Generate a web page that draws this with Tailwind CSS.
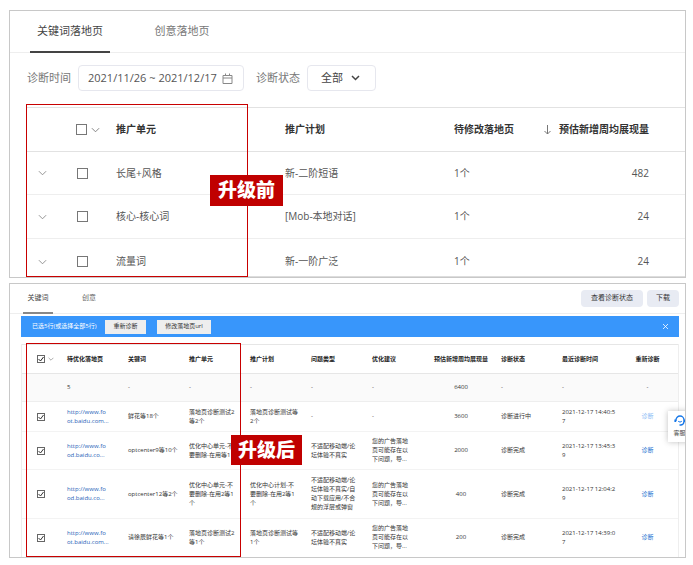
<!DOCTYPE html>
<html lang="zh-CN">
<head>
    <meta charset="UTF-8">
    <meta name="viewport" content="width=device-width, initial-scale=1.0">
    <title>落地页诊断</title>
    <script src="https://cdn.jsdelivr.net/npm/@tailwindcss/browser@4"></script>
</head>
<body class="bg-white pt-[10px] pr-[7px] pb-[7px] pl-[9px] font-['Open_Sans','Noto_Sans_CJK_SC',sans-serif] text-[#444]">
    <svg class="hidden" xmlns="http://www.w3.org/2000/svg">
        <symbol id="chevron" viewBox="0 0 10 6"><path d="M1 1l4 4 4-4" fill="none" stroke="currentColor"/></symbol>
        <symbol id="check" viewBox="0 0 8 8"><path d="M1.5 4l2 2 3-4" fill="none" stroke="currentColor"/></symbol>
    </svg>

    <!-- Before -->
    <section class="relative border border-[#c8c8c8]">
        <nav class="flex h-[42px] gap-[31px] border-b border-[#eee] pl-5 text-[11px]">
            <a href="#" class="-mb-px flex w-20 items-center justify-center border-b-2 border-[#444] text-[#444]">关键词落地页</a>
            <a href="#" class="flex w-[82px] items-center justify-center text-[#777]">创意落地页</a>
        </nav>
        <form class="flex items-center pt-3 pb-4 pl-[17px] text-[11px] text-[#777]">
            <label for="range">诊断时间</label>
            <div class="ml-[7px] flex h-[26px] w-[166px] items-center rounded-sm border border-[#e6e7ee] pr-2.5 pl-[9px]">
                <input id="range" type="text" value="2021/11/26 ~ 2021/12/17" class="min-w-0 flex-1 text-[#555] outline-none">
                <svg class="h-[11px] w-[11px] shrink-0 text-[#888]" viewBox="0 0 11 11" fill="none" stroke="currentColor"><path d="M1 2.5h9v8H1zM1 5h9M3.5 .5v2M7.500 .5v2"/></svg>
            </div>
            <label for="status" class="ml-3">诊断状态</label>
            <div class="ml-[7px] grid h-[26px] w-[69px] items-center rounded-sm border border-[#e6e7ee] text-[#444]">
                <select id="status" class="col-start-1 row-start-1 h-full w-full appearance-none pl-[13px] outline-none">
                    <option>全部</option>
                </select>
                <svg class="pointer-events-none col-start-1 row-start-1 mr-[15px] h-[6px] w-[9px] justify-self-end" viewBox="0 0 9 6" fill="none" stroke="currentColor" stroke-width="1.5"><path d="M1 1l3.500 3.500L8 1"/></svg>
            </div>
        </form>
        <div class="pl-4">
            <table class="w-full table-fixed text-left text-[10px] text-[#555]">
                <colgroup>
                    <col class="w-[45px]">
                    <col class="w-[45px]">
                    <col class="w-[169px]">
                    <col class="w-[169px]">
                    <col class="w-[68px]">
                    <col>
                </colgroup>
                <thead class="text-[#333]">
                    <tr class="h-11 border-y border-[#e2e2e2]">
                        <th></th>
                        <th class="pl-[5px]">
                            <div class="flex items-center gap-1">
                                <input type="checkbox" aria-label="全选" class="h-[11px] w-[11px] appearance-none border border-[#777]">
                                <svg class="h-[6px] w-[9px] text-[#777]"><use href="#chevron"/></svg>
                            </div>
                        </th>
                        <th>推广单元</th>
                        <th>推广计划</th>
                        <th class="whitespace-nowrap">待修改落地页</th>
                        <th class="pr-9">
                            <div class="flex items-center justify-end gap-2">
                                <svg class="h-[10px] w-[7px] text-[#777]" viewBox="0 0 7 10" fill="none" stroke="currentColor"><path d="M3.500 0v9M.5 6l3 3 3-3"/></svg>
                                <span class="whitespace-nowrap">预估新增周均展现量</span>
                            </div>
                        </th>
                    </tr>
                </thead>
                <tbody>
                    <tr class="h-[43px] border-b border-[#eee]">
                        <td class="pl-3"><button type="button" aria-label="展开" class="block text-[#888]"><svg class="h-[6px] w-[9px]"><use href="#chevron"/></svg></button></td>
                        <td class="pl-1.5"><input type="checkbox" aria-label="长尾+风格" class="block h-[11px] w-[11px] appearance-none border border-[#777]"></td>
                        <td>长尾+风格</td>
                        <td>新-二阶短语</td>
                        <td>1个</td>
                        <td class="pr-9 text-right">482</td>
                    </tr>
                    <tr class="h-11 border-b border-[#eee]">
                        <td class="pl-3"><button type="button" aria-label="展开" class="block text-[#888]"><svg class="h-[6px] w-[9px]"><use href="#chevron"/></svg></button></td>
                        <td class="pl-1.5"><input type="checkbox" aria-label="核心-核心词" class="block h-[11px] w-[11px] appearance-none border border-[#777]"></td>
                        <td>核心-核心词</td>
                        <td>[Mob-本地对话]</td>
                        <td>1个</td>
                        <td class="pr-9 text-right">24</td>
                    </tr>
                    <tr class="h-[38px] border-b border-[#ddd]">
                        <td class="pt-2 pl-3"><button type="button" aria-label="展开" class="block text-[#888]"><svg class="h-[6px] w-[9px]"><use href="#chevron"/></svg></button></td>
                        <td class="pt-2 pl-1.5"><input type="checkbox" aria-label="流量词" class="block h-[11px] w-[11px] appearance-none border border-[#777]"></td>
                        <td class="pt-2">流量词</td>
                        <td class="pt-2">新-一阶广泛</td>
                        <td class="pt-2">1个</td>
                        <td class="pt-2 pr-9 text-right">24</td>
                    </tr>
                </tbody>
            </table>
        </div>
        <div class="pointer-events-none absolute top-[93px] bottom-0 left-4 w-[222px] border border-[#c80000]"></div>
        <div class="absolute top-[164px] left-[200px] flex h-[31px] w-[73px] items-center justify-center bg-[#c00000] text-[19px] font-black text-white">升级前</div>
    </section>

    <!-- After -->
    <section class="relative mt-[5px] border border-[#c8c8c8]">
        <div class="flex h-[30px] border-b border-[#eee] pl-[13px] text-[7px]">
            <nav class="flex gap-[21px]">
                <a href="#" class="-mb-px flex w-[30px] items-center justify-center border-b-2 border-[#888] text-[#444]">关键词</a>
                <a href="#" class="flex w-[30px] items-center justify-center text-[#666]">创意</a>
            </nav>
            <div class="ml-auto flex items-center gap-1 pr-1.5 text-[#333]">
                <button type="button" class="h-[17px] w-[62px] rounded-sm bg-[#e8ebf3]">查看诊断状态</button>
                <button type="button" class="h-[17px] w-8 rounded-sm bg-[#e8ebf3]">下载</button>
            </div>
        </div>
        <div class="mt-0.5 mr-1.5 ml-[11px] flex h-[21px] items-center bg-[#3896fb] pl-[11px] text-[6px] text-white">
            <span class="w-[73px] whitespace-nowrap">已选5行(或选择全部5行)</span>
            <button type="button" class="h-[14px] w-[41px] bg-[#eee] text-[#333]">重新诊断</button>
            <button type="button" class="ml-[11px] h-[14px] w-[54px] bg-[#eee] text-[#333]">修改落地页url</button>
            <button type="button" aria-label="关闭" class="mr-[11px] ml-auto"><svg class="h-[5px] w-[5px]" viewBox="0 0 5 5" stroke="currentColor" stroke-width=".8"><path d="M0 0l5 5M5 0L0 5"/></svg></button>
        </div>
        <div class="mt-[7px] mr-1.5 ml-[11px] border-x border-[#eee]">
            <table class="w-full table-fixed text-left text-[6px] leading-[9px] whitespace-nowrap text-[#333]">
                <colgroup>
                    <col class="w-[45px]">
                    <col class="w-[61px]">
                    <col class="w-[61px]">
                    <col class="w-[61px]">
                    <col class="w-[61px]">
                    <col class="w-[61px]">
                    <col class="w-[61px]">
                    <col class="w-[68px]">
                    <col class="w-[61px]">
                    <col class="w-[61px]">
                    <col>
                </colgroup>
                <thead class="text-[#222]">
                    <tr class="h-[29px] border-y border-[#e6e6e6]">
                        <th class="pl-[15px]">
                            <div class="flex items-center gap-[3px]">
                                <label class="grid">
                                    <input type="checkbox" checked aria-label="全选" class="col-start-1 row-start-1 h-2 w-2 appearance-none border border-[#666]">
                                    <svg class="pointer-events-none col-start-1 row-start-1 h-2 w-2"><use href="#check"/></svg>
                                </label>
                                <svg class="h-[4px] w-[6px] text-[#777]"><use href="#chevron"/></svg>
                            </div>
                        </th>
                        <th>待优化落地页</th>
                        <th>关键词</th>
                        <th>推广单元</th>
                        <th>推广计划</th>
                        <th>问题类型</th>
                        <th>优化建议</th>
                        <th class="pr-3 text-center">预估新增周均展现量</th>
                        <th>诊断状态</th>
                        <th>最近诊断时间</th>
                        <th class="pr-1.5 text-center">重新诊断</th>
                    </tr>
                </thead>
                <tbody>
                    <tr class="h-7 border-b border-[#eee] bg-[#fafafa]">
                        <td></td>
                        <td>5</td>
                        <td>-</td>
                        <td>-</td>
                        <td>-</td>
                        <td>-</td>
                        <td>-</td>
                        <td class="pr-3 text-center">6400</td>
                        <td>-</td>
                        <td>-</td>
                        <td class="pr-1.5 text-center">-</td>
                    </tr>
                    <tr class="h-[30px] border-b border-[#f3f3f3]">
                        <td class="pl-[15px]">
                            <label class="grid w-2">
                                <input type="checkbox" checked aria-label="鲜花等18个" class="col-start-1 row-start-1 h-2 w-2 appearance-none border border-[#666]">
                                <svg class="pointer-events-none col-start-1 row-start-1 h-2 w-2"><use href="#check"/></svg>
                            </label>
                        </td>
                        <td><a href="#" class="text-[#1f5fb8]">http://www.fo<br>ot.baidu.com...</a></td>
                        <td>鲜花等18个</td>
                        <td>落地页诊断测试2<br>等2个</td>
                        <td>落地页诊断测试等<br>2个</td>
                        <td>-</td>
                        <td>-</td>
                        <td class="pr-3 text-center">3600</td>
                        <td>诊断进行中</td>
                        <td>2021-12-17 14:40:5<br>7</td>
                        <td class="pr-1.5 text-center"><a href="#" class="text-[#8cbcf5]">诊断</a></td>
                    </tr>
                    <tr class="h-[38px] border-b border-[#f3f3f3]">
                        <td class="pl-[15px]">
                            <label class="grid w-2">
                                <input type="checkbox" checked aria-label="optcenter9等10个" class="col-start-1 row-start-1 h-2 w-2 appearance-none border border-[#666]">
                                <svg class="pointer-events-none col-start-1 row-start-1 h-2 w-2"><use href="#check"/></svg>
                            </label>
                        </td>
                        <td><a href="#" class="text-[#1f5fb8]">http://www.fo<br>od.baidu.co...</a></td>
                        <td>optcenter9等10个</td>
                        <td>优化中心单元-不<br>要删除-在用等1</td>
                        <td></td>
                        <td>不适配移动端/论<br>坛体验不真实</td>
                        <td>您的广告落地<br>页可能存在以<br>下问题，导...</td>
                        <td class="pr-3 text-center">2000</td>
                        <td>诊断完成</td>
                        <td>2021-12-17 13:45:3<br>9</td>
                        <td class="pr-1.5 text-center"><a href="#" class="text-[#1c6fd0]">诊断</a></td>
                    </tr>
                    <tr class="h-[49px] border-b border-[#f3f3f3]">
                        <td class="pl-[15px]">
                            <label class="grid w-2">
                                <input type="checkbox" checked aria-label="optcenter12等2个" class="col-start-1 row-start-1 h-2 w-2 appearance-none border border-[#666]">
                                <svg class="pointer-events-none col-start-1 row-start-1 h-2 w-2"><use href="#check"/></svg>
                            </label>
                        </td>
                        <td><a href="#" class="text-[#1f5fb8]">http://www.fo<br>od.baidu.co...</a></td>
                        <td>optcenter12等2个</td>
                        <td>优化中心单元-不<br>要删除-在用2等1<br>个</td>
                        <td>优化中心计划-不<br>要删除-在用2等1<br>个</td>
                        <td>不适配移动端/论<br>坛体验不真实/自<br>动下载应用/不合<br>规的浮层或弹窗</td>
                        <td>您的广告落地<br>页可能存在以<br>下问题，导...</td>
                        <td class="pr-3 text-center">400</td>
                        <td>诊断完成</td>
                        <td>2021-12-17 12:04:2<br>9</td>
                        <td class="pr-1.5 text-center"><a href="#" class="text-[#1c6fd0]">诊断</a></td>
                    </tr>
                    <tr class="h-[38px]">
                        <td class="pl-[15px]">
                            <label class="grid w-2">
                                <input type="checkbox" checked aria-label="请徐辰鲜花等1个" class="col-start-1 row-start-1 h-2 w-2 appearance-none border border-[#666]">
                                <svg class="pointer-events-none col-start-1 row-start-1 h-2 w-2"><use href="#check"/></svg>
                            </label>
                        </td>
                        <td><a href="#" class="text-[#1f5fb8]">http://www.fo<br>ot.baidu.com...</a></td>
                        <td>请徐辰鲜花等1个</td>
                        <td>落地页诊断测试2<br>等1个</td>
                        <td>落地页诊断测试等<br>1个</td>
                        <td>不适配移动端/论<br>坛体验不真实</td>
                        <td>您的广告落地<br>页可能存在以<br>下问题，导...</td>
                        <td class="pr-3 text-center">200</td>
                        <td>诊断完成</td>
                        <td>2021-12-17 14:39:0<br>7</td>
                        <td class="pr-1.5 text-center"><a href="#" class="text-[#1c6fd0]">诊断</a></td>
                    </tr>
                </tbody>
            </table>
        </div>

        <!-- support button, cut off by the panel edge -->
        <div class="pointer-events-none absolute inset-0 overflow-hidden">
            <button type="button" class="pointer-events-auto absolute top-[127px] -right-1.5 flex h-[31px] w-[23px] flex-col items-center justify-center gap-[3px] bg-white text-[6px] leading-[9px] text-[#444] shadow-[0_0_6px_rgba(0,0,0,0.25)]">
                <svg class="h-[11px] w-[12px]" viewBox="0 0 12 11" fill="none" stroke="#1677e8"><path d="M2 6V5a4 4 0 0 1 8 0v1.500a3.500 3.500 0 0 1-3 3.500H5.500" stroke-width="1.300"/><path d="M1.300 4.500v2.500M10.700 4.500v2.500" stroke-width="1.800"/><path d="M4.200 6.300q1.800 1.600 3.600 0"/></svg>
                客服
            </button>
        </div>
        <div class="pointer-events-none absolute top-[59px] bottom-0 left-4 w-[215px] border border-[#c80000]"></div>
        <div class="absolute top-[151px] left-[221px] flex h-[30px] w-[71px] items-center justify-center bg-[#c00000] text-[19px] font-black text-white">升级后</div>
    </section>
</body>
</html>
